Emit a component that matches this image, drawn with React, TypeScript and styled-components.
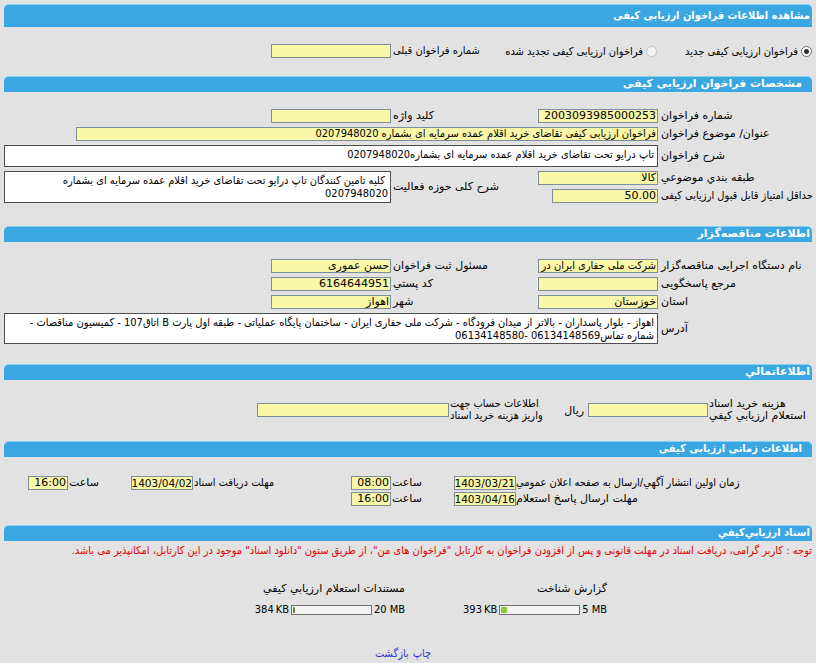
import React from "react";
import styled, { createGlobalStyle, css } from "styled-components";

const GlobalStyle = createGlobalStyle`
  html, body { margin: 0; padding: 0; background: #e2e2e2; }
  body {
    font-family: "DejaVu Sans", Tahoma, sans-serif;
    font-size: 11px;
    color: #000;
    direction: rtl;
  }
  * { box-sizing: border-box; }
`;

const narrowFont = css`
  font-family: "DejaVu Sans Condensed", "DejaVu Sans", sans-serif;
  font-stretch: condensed;
`;

const Page = styled.div`
  width: 816px;
  height: 663px;
  padding: 4px 4px 0;
  overflow: hidden;
`;

const Header = styled.div<{ $tall?: boolean; $indent?: number; $top?: number; $narrow?: boolean }>`
  margin-top: ${(p) => p.$top ?? 0}px;
  height: ${(p) => (p.$tall ? 23 : 16)}px;
  background: #3aa6e2;
  border-top: 1px solid #86d0f4;
  border-radius: 5px 5px 0 0;
  color: #fff;
  font-weight: bold;
  font-size: 11px;
  line-height: ${(p) => (p.$tall ? 21 : 14)}px;
  padding-right: ${(p) => p.$indent ?? 2}px;
  white-space: nowrap;
  ${(p) => p.$narrow && narrowFont}
`;

const RadioRow = styled.div`
  margin-top: 17px;
  height: 14px;
  display: grid;
  grid-template-columns: 124px 180px 117px 120px 1fr;
  align-items: center;
`;

const RadioOption = styled.label<{ $pad?: number }>`
  display: flex;
  align-items: center;
  gap: 3px;
  padding-right: ${(p) => p.$pad ?? 0}px;
  white-space: nowrap;
  ${narrowFont}
`;

const RadioDot = styled.span<{ $on?: boolean }>`
  flex-shrink: 0;
  width: 11px;
  height: 11px;
  border-radius: 50%;
  border: 1px solid ${(p) => (p.$on ? "#6a6a6a" : "#c2c2c2")};
  background: ${(p) => (p.$on ? "#fff" : "#f4f4f4")};
  display: flex;
  align-items: center;
  justify-content: center;
  &::after {
    content: "";
    width: 5px;
    height: 5px;
    border-radius: 50%;
    background: ${(p) => (p.$on ? "#2a2a2a" : "transparent")};
  }
`;

const FormGrid = styled.div<{ $top: number; $rows: string }>`
  margin-top: ${(p) => p.$top}px;
  display: grid;
  grid-template-columns: 154px 120px 147px 120px 1fr;
  grid-template-rows: ${(p) => p.$rows};
  row-gap: 4px;
`;

const Label = styled.div<{ $pad?: number; $rowSpan?: number; $narrow?: boolean }>`
  ${(p) => (p.$rowSpan ? `grid-row: span ${p.$rowSpan};` : "")}
  display: flex;
  align-items: center;
  justify-content: flex-end;
  padding-left: ${(p) => p.$pad ?? 3}px;
  white-space: nowrap;
  line-height: 14px;
  ${(p) => p.$narrow && narrowFont}
`;

const Field = styled.div<{ $w?: number; $span?: string; $small?: boolean; $narrow?: boolean }>`
  ${(p) => (p.$span ? `grid-column: ${p.$span};` : "")}
  width: ${(p) => (p.$w ? `${p.$w}px` : "100%")};
  height: 14px;
  background: #faf7a9;
  border: 1px solid #7d8e9b;
  font-size: ${(p) => (p.$small ? 10.5 : 11)}px;
  line-height: 12px;
  white-space: nowrap;
  overflow: hidden;
  text-align: right;
  padding: 0 ${(p) => (p.$small ? 0 : 1)}px;
  ${(p) => p.$narrow && narrowFont}
`;

const TextBox = styled.div<{ $span: string; $rowSpan?: number; $pad?: number }>`
  grid-column: ${(p) => p.$span};
  ${(p) => (p.$rowSpan ? `grid-row: span ${p.$rowSpan};` : "")}
  background: #fff;
  border: 1px solid #505050;
  line-height: 13px;
  padding: 2px ${(p) => p.$pad ?? 3}px 0;
  white-space: nowrap;
  overflow: hidden;
  ${narrowFont}
`;

const FinanceRow = styled.div`
  margin-top: 18px;
  height: 24px;
  display: grid;
  grid-template-columns: 104px 120px 45px 94px 192px 1fr;
  align-items: center;
`;

const TwoLineLabel = styled.div<{ $narrow?: boolean }>`
  line-height: 12px;
  text-align: left;
  padding-left: 1px;
  white-space: nowrap;
  ${(p) => p.$narrow && narrowFont}
`;

const UnitLabel = styled.div`
  text-align: right;
  padding-right: 4px;
`;

const TimeGrid = styled.div`
  margin-top: 19px;
  display: grid;
  grid-template-columns: 296px 62px 63px 40px 158px 62px 63px 40px 1fr;
  grid-template-rows: 14px 14px;
  row-gap: 2px;
`;

const Notice = styled.div`
  margin-top: 3px;
  color: #e00000;
  line-height: 14px;
  white-space: nowrap;
  ${narrowFont}
`;

const DocsGrid = styled.div`
  margin-top: 24px;
  display: grid;
  grid-template-columns: repeat(4, 1fr);
`;

const DocCell = styled.div<{ $col: number }>`
  grid-column: ${(p) => p.$col};
  display: flex;
  flex-direction: column;
  align-items: flex-start;
  gap: 8px;
  padding-right: 3px;
`;

const DocTitle = styled.div`
  line-height: 14px;
  white-space: nowrap;
`;

const BarRow = styled.div`
  direction: ltr;
  display: flex;
  align-items: center;
  gap: 2px;
  height: 11px;
  font-size: 11px;
  white-space: nowrap;
  ${narrowFont}
`;

const Bar = styled.div`
  width: 81px;
  height: 10px;
  border: 1px solid #707070;
  background: #f3f3f3;
  padding: 1px;
  display: flex;
`;

const BarFill = styled.div<{ $dark?: boolean }>`
  height: 100%;
  background: ${(p) => (p.$dark ? "#6f7f35" : "#8cc63e")};
  border-radius: 1px;
`;

const Links = styled.div`
  margin-top: 32px;
  display: flex;
  justify-content: center;
  gap: 4px;
  padding-right: 10px;
  ${narrowFont}
`;

const LinkText = styled.a`
  color: #3535cc;
  text-decoration: none;
  cursor: pointer;
`;

function Progress({ used, total, pct, dark }: { used: string; total: string; pct: number; dark?: boolean }) {
  return (
    <BarRow>
      <span>{used}</span>
      <Bar>
        <BarFill $dark={dark} style={{ width: `${pct}%` }} />
      </Bar>
      <span>{total}</span>
    </BarRow>
  );
}

export default function App() {
  return (
    <Page>
      <GlobalStyle />
      <Header $tall $narrow>مشاهده اطلاعات فراخوان ارزیابی کیفی</Header>

      <RadioRow>
        <RadioOption>
          <RadioDot $on />
          فراخوان ارزیابی کیفی جدید
        </RadioOption>
        <RadioOption $pad={31}>
          <RadioDot />
          فراخوان ارزیابی کیفی تجدید شده
        </RadioOption>
        <Label $pad={2} $narrow>شماره فراخوان قبلی</Label>
        <Field />
      </RadioRow>

      <Header $top={18} $indent={10}>مشخصات فراخوان ارزیابی کیفی</Header>

      <FormGrid $top={17} $rows="14px 14px 22px 14px 14px">
        <Label>شماره فراخوان</Label>
        <Field>2003093985000253</Field>
        <Label $pad={2}>کلید واژه</Label>
        <Field />
        <div />

        <Label>عنوان/ موضوع فراخوان</Label>
        <Field $span="2 / 6" $w={582} $narrow>فراخوان ارزیابی کیفی تقاضای خرید اقلام عمده سرمایه ای بشماره 0207948020</Field>

        <Label>شرح فراخوان</Label>
        <TextBox $span="2 / 6">تاپ درایو تحت  تقاضای خرید اقلام عمده سرمایه ای بشماره0207948020</TextBox>

        <Label>طبقه بندي موضوعي</Label>
        <Field>کالا</Field>
        <Label $pad={2} $rowSpan={2}>شرح کلی حوزه فعالیت</Label>
        <TextBox $span="4 / 6" $rowSpan={2} $pad={2}>
          &nbsp;کلیه تامین کنندگان تاپ درایو تحت  تقاضای خرید اقلام عمده سرمایه ای بشماره
          <br />
          0207948020
        </TextBox>

        <Label $narrow>حداقل امتیاز قابل قبول ارزیابی کیفی</Label>
        <Field $w={106}>50.00</Field>
      </FormGrid>

      <Header $top={23}>اطلاعات مناقصه‌گزار</Header>

      <FormGrid $top={17} $rows="14px 14px 14px 31px">
        <Label>نام دستگاه اجرایی مناقصه‌گزار</Label>
        <Field $narrow>شرکت ملی حفاری ایران در</Field>
        <Label $pad={2}>مسئول ثبت فراخوان</Label>
        <Field>حسن عموری</Field>
        <div />

        <Label>مرجع پاسخگویی</Label>
        <Field />
        <Label $pad={2}>کد پستي</Label>
        <Field>6164644951</Field>
        <div />

        <Label>استان</Label>
        <Field>خوزستان</Field>
        <Label $pad={2}>شهر</Label>
        <Field>اهواز</Field>
        <div />

        <Label>آدرس</Label>
        <TextBox $span="2 / 6">
          اهواز - بلوار پاسداران - بالاتر از میدان فرودگاه - شرکت ملی حفاری ایران - ساختمان پایگاه عملیاتی - طبقه اول پارت B اتاق107 -  کمیسیون مناقصات -
          <br />
          شماره تماس06134148569 -06134148580
        </TextBox>
      </FormGrid>

      <Header $top={20}>اطلاعاتمالي</Header>

      <FinanceRow>
        <TwoLineLabel>
          هزینه خرید اسناد
          <br />
          استعلام ارزیابي کیفي
        </TwoLineLabel>
        <Field />
        <UnitLabel>ریال</UnitLabel>
        <TwoLineLabel $narrow>
          اطلاعات حساب جهت
          <br />
          واریز هزینه خرید اسناد
        </TwoLineLabel>
        <Field />
      </FinanceRow>

      <Header $top={19} $indent={10} $narrow>اطلاعات زمانی ارزیابی کیفی</Header>

      <TimeGrid>
        <Label $pad={0} $narrow>زمان اولین انتشار آگهي/ارسال به صفحه اعلان عمومي</Label>
        <Field $small>1403/03/21</Field>
        <Label $pad={1}>ساعت</Label>
        <Field>08:00</Field>
        <Label $pad={1} $narrow>مهلت دریافت اسناد</Label>
        <Field $small>1403/04/02</Field>
        <Label $pad={1}>ساعت</Label>
        <Field>16:00</Field>
        <div />

        <Label $pad={0}>مهلت ارسال پاسخ استعلام</Label>
        <Field $small>1403/04/16</Field>
        <Label $pad={1}>ساعت</Label>
        <Field>16:00</Field>
      </TimeGrid>

      <Header $top={19} $narrow>اسناد ارزيابي‌کيفي</Header>

      <Notice>
        توجه : کاربر گرامی، دریافت اسناد در مهلت قانونی و پس از افزودن فراخوان به کارتابل "فراخوان های من"، از طریق ستون "دانلود اسناد" موجود در این کارتابل، امکانپذیر می باشد.
      </Notice>

      <DocsGrid>
        <DocCell $col={2}>
          <DocTitle>گزارش شناخت</DocTitle>
          <Progress used={"393\u2009KB"} total="5 MB" pct={8} />
        </DocCell>
        <DocCell $col={3}>
          <DocTitle>مستندات استعلام ارزیابي کیفي</DocTitle>
          <Progress used={"384\u2009KB"} total="20 MB" pct={2.5} dark />
        </DocCell>
      </DocsGrid>

      <Links>
        <LinkText>چاپ</LinkText>
        <LinkText>بازگشت</LinkText>
      </Links>
    </Page>
  );
}
